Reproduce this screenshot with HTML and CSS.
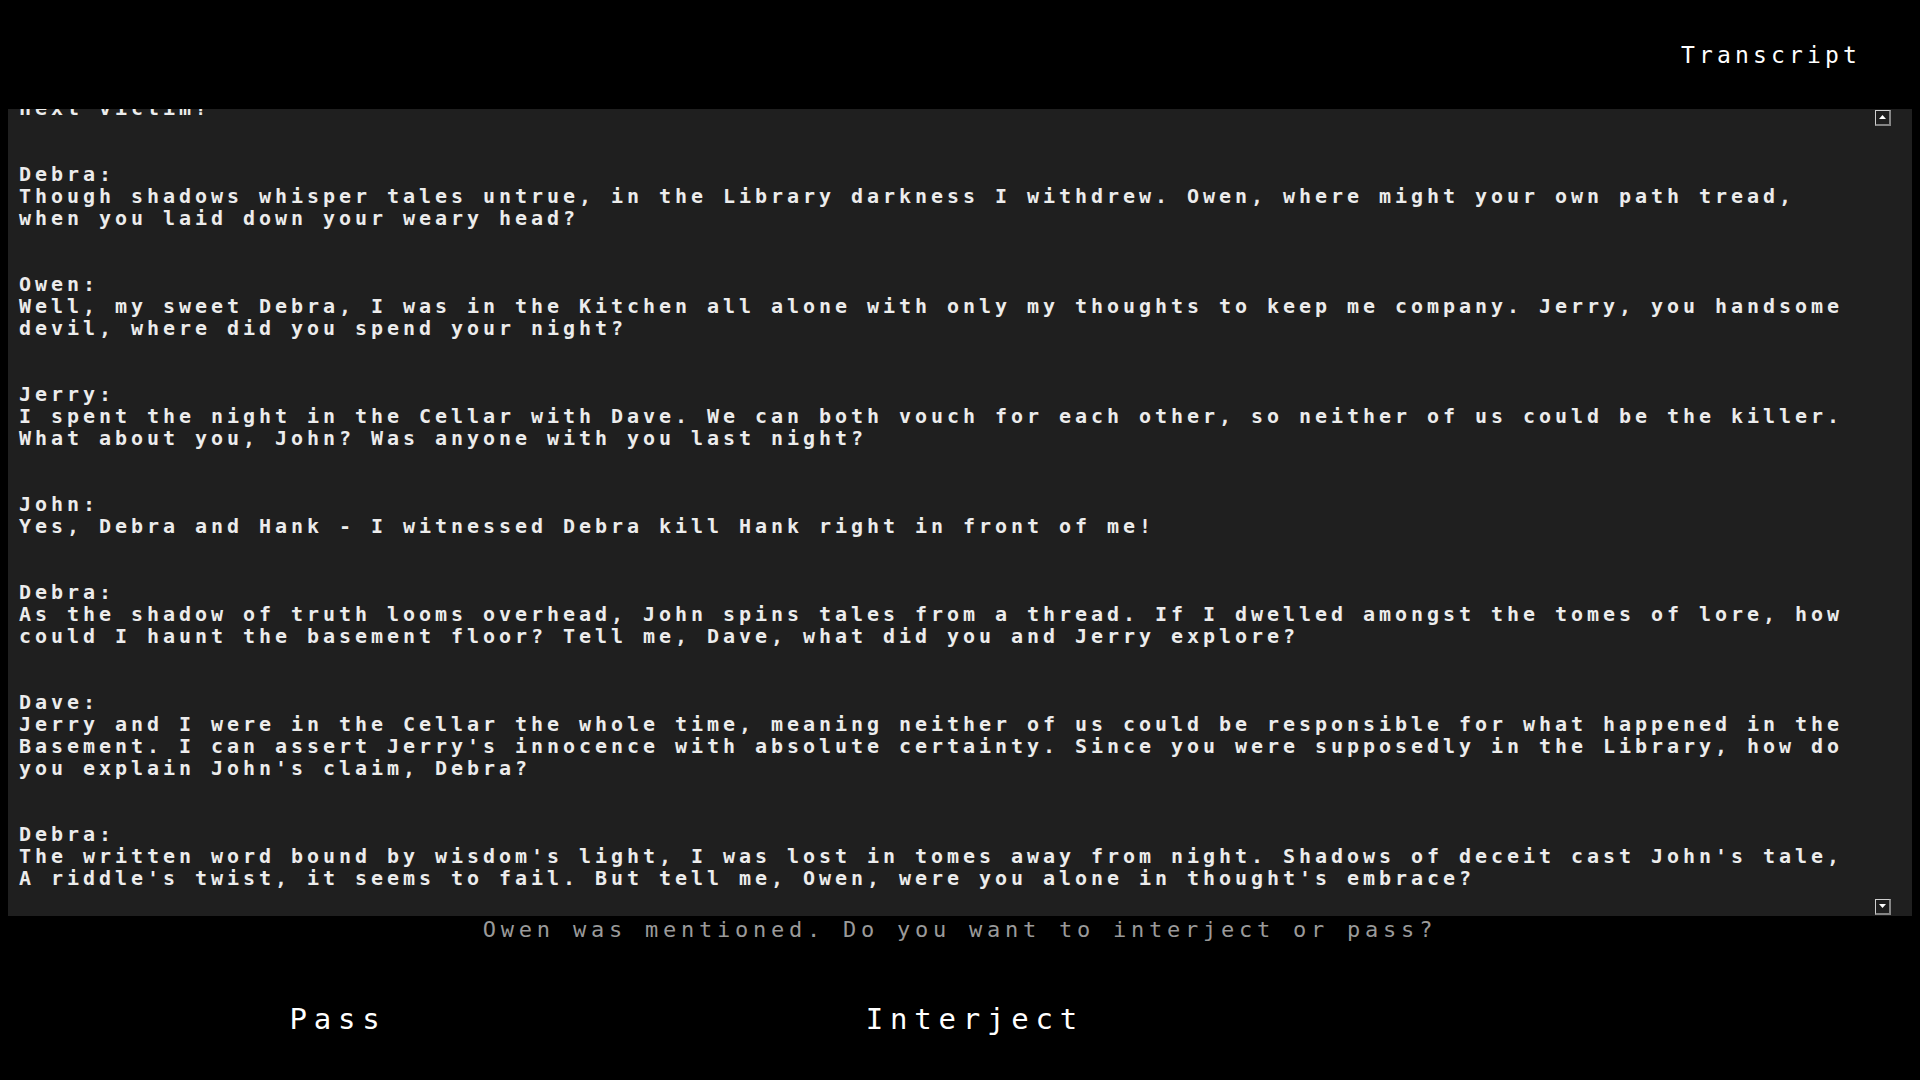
FILE: index.html
```html
<!DOCTYPE html>
<html lang="en">
<head>
<meta charset="utf-8">
<title>Transcript</title>
<link rel="stylesheet" href="styles.css">
</head>
<body>
<header class="topbar">
  <h1 class="title">Transcript</h1>
</header>
<main class="panel">
  <div class="log">
    <div class="msg">
      <p class="line">next victim?</p>
    </div>
    <div class="msg">
      <p class="line">Debra:</p>
      <p class="line">Though shadows whisper tales untrue, in the Library darkness I withdrew. Owen, where might your own path tread,</p>
      <p class="line">when you laid down your weary head?</p>
    </div>
    <div class="msg">
      <p class="line">Owen:</p>
      <p class="line">Well, my sweet Debra, I was in the Kitchen all alone with only my thoughts to keep me company. Jerry, you handsome</p>
      <p class="line">devil, where did you spend your night?</p>
    </div>
    <div class="msg">
      <p class="line">Jerry:</p>
      <p class="line">I spent the night in the Cellar with Dave. We can both vouch for each other, so neither of us could be the killer.</p>
      <p class="line">What about you, John? Was anyone with you last night?</p>
    </div>
    <div class="msg">
      <p class="line">John:</p>
      <p class="line">Yes, Debra and Hank - I witnessed Debra kill Hank right in front of me!</p>
    </div>
    <div class="msg">
      <p class="line">Debra:</p>
      <p class="line">As the shadow of truth looms overhead, John spins tales from a thread. If I dwelled amongst the tomes of lore, how</p>
      <p class="line">could I haunt the basement floor? Tell me, Dave, what did you and Jerry explore?</p>
    </div>
    <div class="msg">
      <p class="line">Dave:</p>
      <p class="line">Jerry and I were in the Cellar the whole time, meaning neither of us could be responsible for what happened in the</p>
      <p class="line">Basement. I can assert Jerry's innocence with absolute certainty. Since you were supposedly in the Library, how do</p>
      <p class="line">you explain John's claim, Debra?</p>
    </div>
    <div class="msg">
      <p class="line">Debra:</p>
      <p class="line">The written word bound by wisdom's light, I was lost in tomes away from night. Shadows of deceit cast John's tale,</p>
      <p class="line">A riddle's twist, it seems to fail. But tell me, Owen, were you alone in thought's embrace?</p>
    </div>
  </div>
  <div class="scrollbar">
    <span class="sb-btn"><svg class="arrow" width="7" height="4" viewBox="0 0 7 4"><polygon points="0,4 3.5,0 7,4" fill="#ffffff"/></svg></span>
    <span class="sb-btn"><svg class="arrow" width="7" height="4" viewBox="0 0 7 4"><polygon points="0,0 7,0 3.5,4" fill="#ffffff"/></svg></span>
  </div>
</main>
<p class="prompt">Owen was mentioned. Do you want to interject or pass?</p>
<div class="actions">
  <button class="btn">Pass</button>
  <button class="btn">Interject</button>
</div>
</body>
</html>
```

FILE: styles.css
```css
html {
  background: #000;
}

body {
  margin: 8px;
  background: #000;
  font-family: "DejaVu Sans Mono", "Liberation Mono", monospace;
  color: #fff;
  overflow: hidden;
}

.topbar {
  height: 101px;
  box-sizing: border-box;
  padding-top: 34px;
  padding-right: 51px;
  display: flex;
  justify-content: flex-end;
  align-items: flex-start;
}

.title {
  margin: 0;
  font-size: 23px;
  font-weight: normal;
  line-height: 27px;
  letter-spacing: 4.15px;
  color: #ffffff;
}

.panel {
  display: flex;
  height: 807px;
  box-sizing: border-box;
  padding-right: 21px;
  background: #1f1f1f;
  overflow: hidden;
}

.log {
  flex: 1;
  min-width: 0;
  margin-top: -12px;
  padding-left: 11px;
  font-size: 20px;
  font-weight: bold;
  line-height: 22px;
  letter-spacing: 3.96px;
  color: #ececec;
}

.msg {
  margin-bottom: 44px;
}

.line {
  margin: 0;
  white-space: pre;
}

.scrollbar {
  flex: none;
  width: 16px;
  box-sizing: border-box;
  padding: 1px 0;
  display: flex;
  flex-direction: column;
  justify-content: space-between;
}

.sb-btn {
  width: 16px;
  height: 16px;
  box-sizing: border-box;
  border-style: solid;
  border-width: 1px 2px 2px 1px;
  border-color: #d0d0d0 #858585 #858585 #d0d0d0;
  background: #1f1f1f;
  display: flex;
  justify-content: center;
  align-items: flex-start;
  padding-top: 4px;
}

.arrow {
  display: block;
}

.prompt {
  margin: 1px 0 0;
  text-align: center;
  font-size: 22px;
  line-height: 26px;
  letter-spacing: 4.76px;
  color: #9a9a9a;
}

.actions {
  display: flex;
  margin-top: 59px;
  padding-left: 8px;
}

.btn {
  width: 637px;
  padding: 0 0 0 6.8px;
  border: 0;
  background: none;
  font-family: inherit;
  font-size: 29px;
  line-height: 34px;
  letter-spacing: 6.8px;
  color: #ffffff;
  text-align: center;
  cursor: pointer;
}
```
